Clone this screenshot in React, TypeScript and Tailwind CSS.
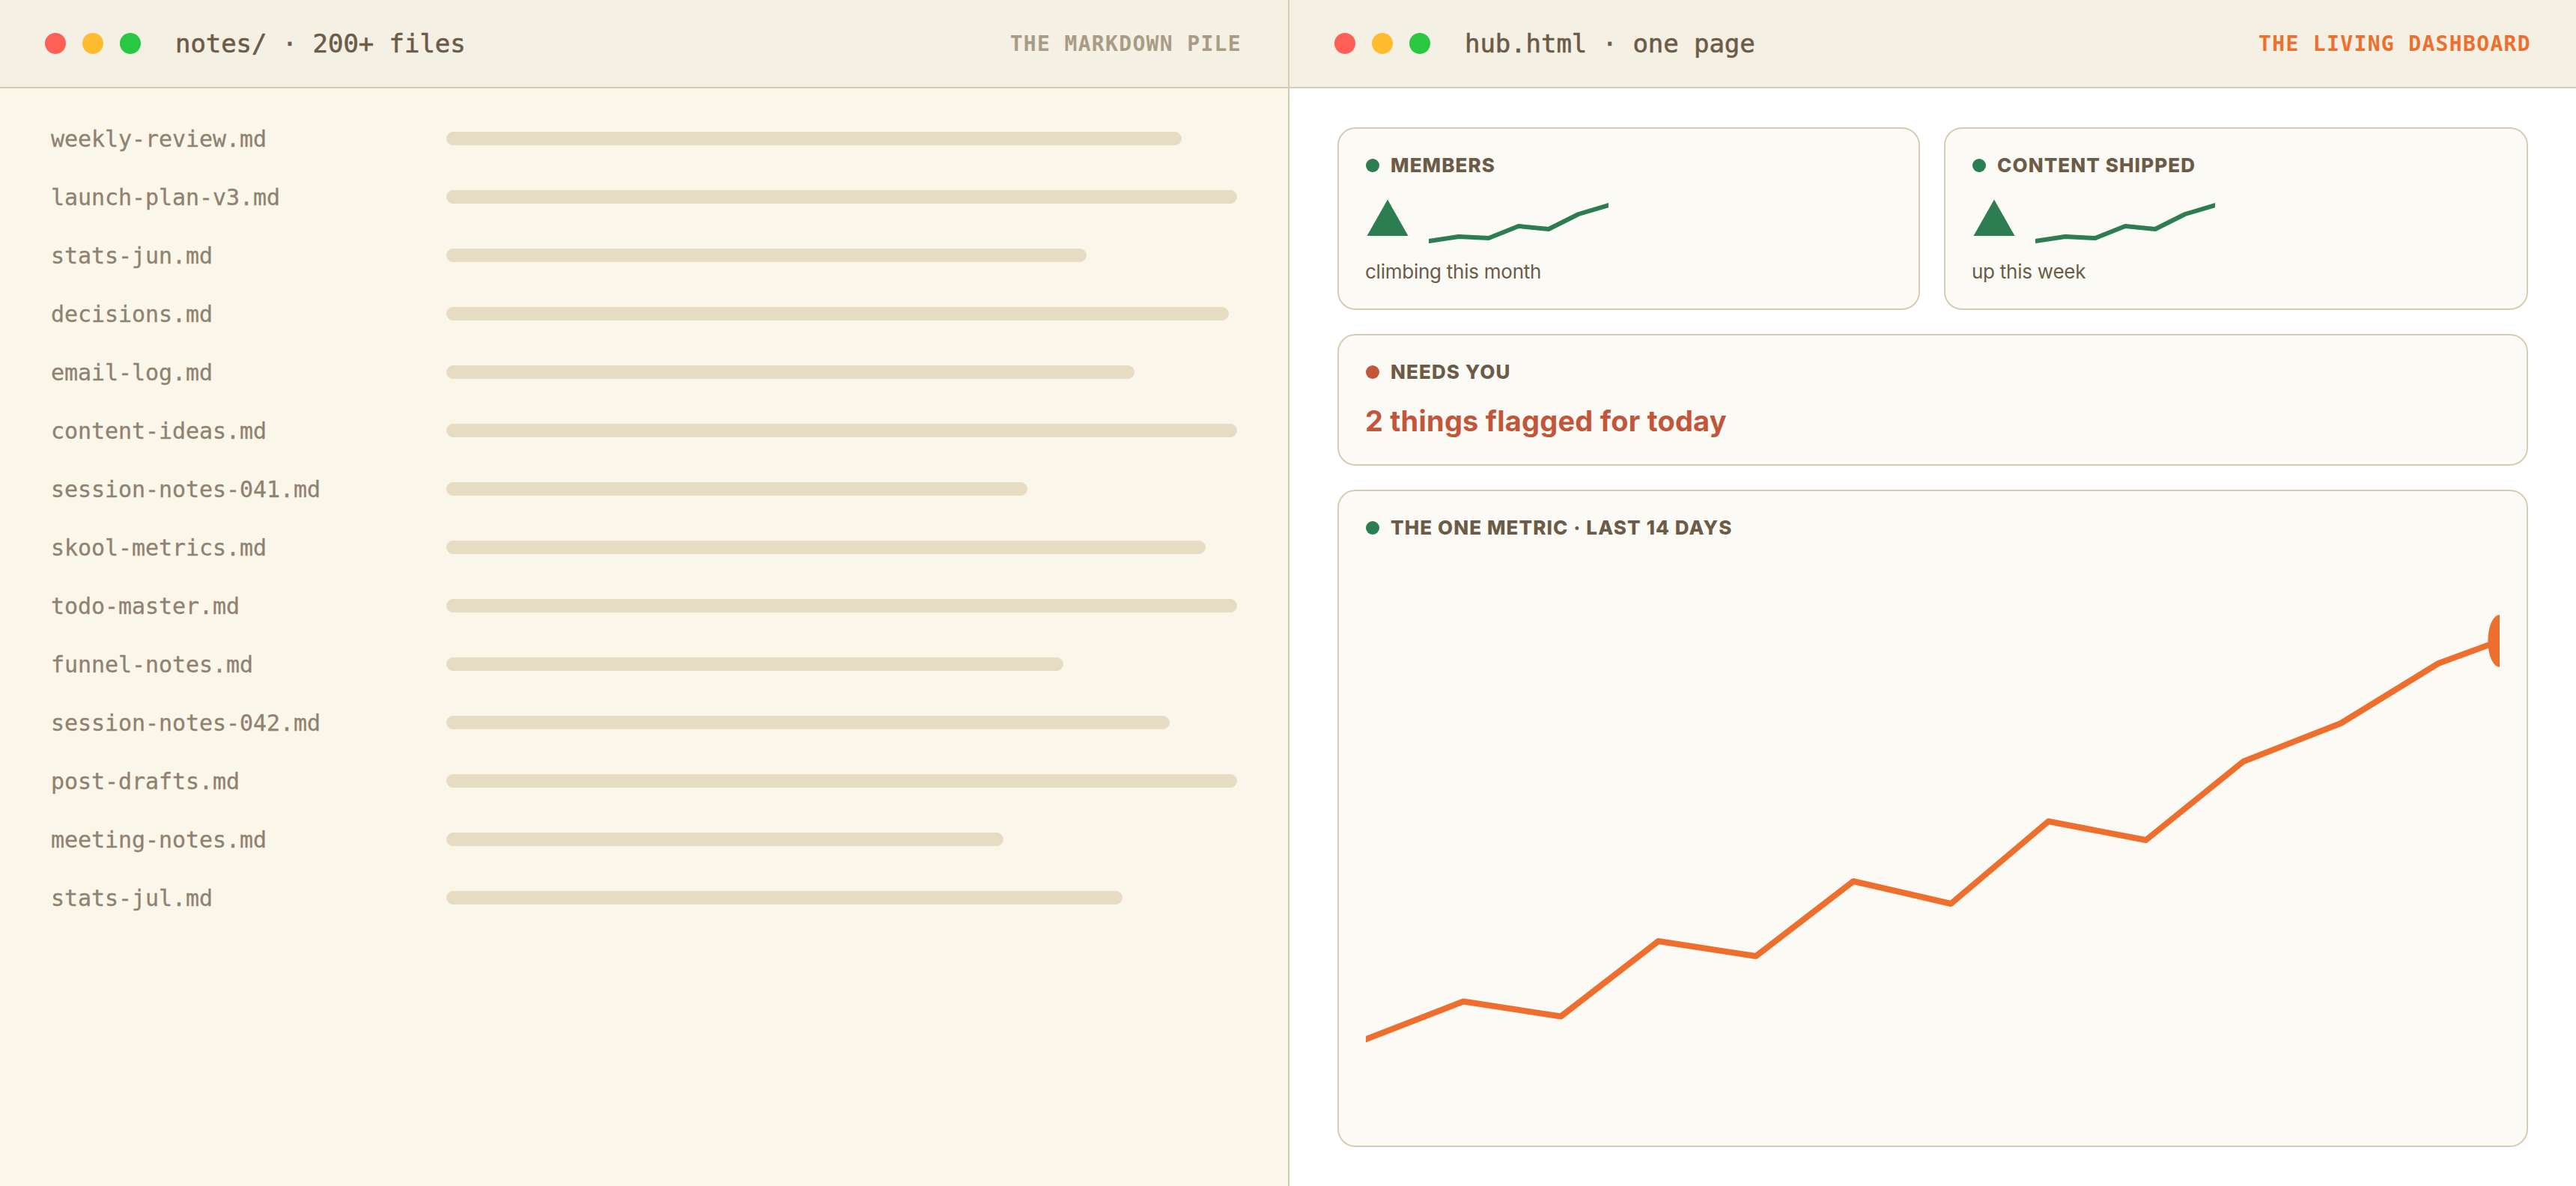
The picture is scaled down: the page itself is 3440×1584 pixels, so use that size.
const files = [
  { name: 'weekly-review.md', width: 62 },
  { name: 'launch-plan-v3.md', width: 71 },
  { name: 'stats-jun.md', width: 54 },
  { name: 'decisions.md', width: 66 },
  { name: 'email-log.md', width: 58 },
  { name: 'content-ideas.md', width: 74 },
  { name: 'session-notes-041.md', width: 49 },
  { name: 'skool-metrics.md', width: 64 },
  { name: 'todo-master.md', width: 78 },
  { name: 'funnel-notes.md', width: 52 },
  { name: 'session-notes-042.md', width: 61 },
  { name: 'post-drafts.md', width: 69 },
  { name: 'meeting-notes.md', width: 47 },
  { name: 'stats-jul.md', width: 57 },
];

function TitleBar({ title, label, accent }: { title: string; label: string; accent: string }) {
  return (
    <div className="flex h-[118px] shrink-0 items-center border-b-2 border-[#d6ccb4] bg-[#f5f0e4] px-[60px] font-['DejaVu_Sans_Mono',monospace]">
      <div className="flex gap-[22px]">
        <span className="size-7 rounded-full bg-[#ff5f57]"></span>
        <span className="size-7 rounded-full bg-[#febc2e]"></span>
        <span className="size-7 rounded-full bg-[#28c840]"></span>
      </div>
      <span className="ml-[46px] text-[34px] leading-none tracking-[-0.07px] text-[#6b5b47] [-webkit-text-stroke:0.6px]">{title}</span>
      <span className={`ml-auto pt-0.5 text-[28px] leading-none font-bold tracking-[1.34px] ${accent}`}>{label}</span>
    </div>
  );
}

function CardLabel({ text, dot = 'bg-[#2d7d52]' }: { text: string; dot?: string }) {
  return (
    <div className="flex h-[18px] items-center gap-[15px]">
      <span className={`size-[18px] rounded-full ${dot}`}></span>
      <span className="text-[26px] leading-none font-extrabold tracking-[1.1px] whitespace-nowrap text-[#6b5b47]">{text}</span>
    </div>
  );
}

function TrendCard({ label, note }: { label: string; note: string }) {
  return (
    <div className="h-[244px] rounded-3xl border-2 border-[#d6ccb4] bg-[#fcfaf4] px-9 pt-10">
      <CardLabel text={label} />
      <div className="mt-8 flex gap-6">
        <svg className="h-[68px] w-[60px]" viewBox="0 0 60 68">
          <path d="M29 4.5 L56.5 53 L1.5 53 Z" fill="#2d7d52" />
        </svg>
        <svg className="h-[68px] w-[240px]" viewBox="0 0 240 68" fill="none">
          <polyline
            points="0,60 40,54 80,56 120,40 160,44 200,24 240,12"
            stroke="#2d7d52"
            strokeWidth="6"
            strokeLinecap="round"
            strokeLinejoin="round"
          />
        </svg>
      </div>
      <p className="mt-5 -ml-px text-[26px] leading-[26px] tracking-[-0.25px] text-[#6b5b47]">{note}</p>
    </div>
  );
}

function App() {
  return (
    <div className="grid h-screen grid-cols-2 overflow-hidden font-[Inter,sans-serif]">
      <section className="flex flex-col bg-[#fbf6ea]">
        <TitleBar title="notes/ · 200+ files" label="THE MARKDOWN PILE" accent="mr-0.5 text-[#a89c84]" />
        <ul className="flex flex-col gap-10 px-[68px] pt-12 font-['DejaVu_Sans_Mono',monospace]">
          {files.map((file) => (
            <li key={file.name} className="flex h-[38px] items-center">
              <span className="w-[528px] shrink-0 pt-0.5 text-[30px] leading-none tracking-[-0.06px] text-[#8f8270] [-webkit-text-stroke:0.3px]">{file.name}</span>
              <span className="h-[18px] rounded-full bg-[#e6dcc4]" style={{ width: `${file.width}%` }}></span>
            </li>
          ))}
        </ul>
      </section>

      <section className="flex flex-col border-l-2 border-[#d6ccb4] bg-white">
        <TitleBar title="hub.html · one page" label="THE LIVING DASHBOARD" accent="text-[#ee6f2d]" />
        <div className="flex flex-1 flex-col gap-8 px-16 py-[52px]">
          <div className="grid grid-cols-[778px_1fr] gap-8">
            <TrendCard label="MEMBERS" note="climbing this month" />
            <TrendCard label="CONTENT SHIPPED" note="up this week" />
          </div>

          <div className="h-[176px] rounded-3xl border-2 border-[#d6ccb4] bg-[#fcfaf4] px-9 pt-10">
            <CardLabel text="NEEDS YOU" dot="bg-[#c2553a]" />
            <p className="mt-9 -ml-px text-[38px] leading-[40px] font-bold tracking-[0.22px] text-[#c2553a]">2 things flagged for today</p>
          </div>

          <div className="flex flex-1 flex-col rounded-3xl border-2 border-[#d6ccb4] bg-[#fcfaf4] px-9 pt-10 pb-10">
            <CardLabel text="THE ONE METRIC · LAST 14 DAYS" />
            <svg className="mt-[26px] h-[750px] w-full" viewBox="0 0 1000 750" preserveAspectRatio="none" fill="none">
              <polyline
                points="0,648 86,597.5 172,617.5 258,517 344,537 430,437 516,467 602,357 688,382 774,277 860,226 946,146 1000,116"
                stroke="#ee6f2d"
                strokeWidth="8"
                strokeLinecap="round"
                strokeLinejoin="round"
                vectorEffect="non-scaling-stroke"
              />
              <ellipse cx="1000" cy="116" rx="10.3" ry="35" fill="#ee6f2d" />
            </svg>
          </div>
        </div>
      </section>
    </div>
  );
}

export default App;
